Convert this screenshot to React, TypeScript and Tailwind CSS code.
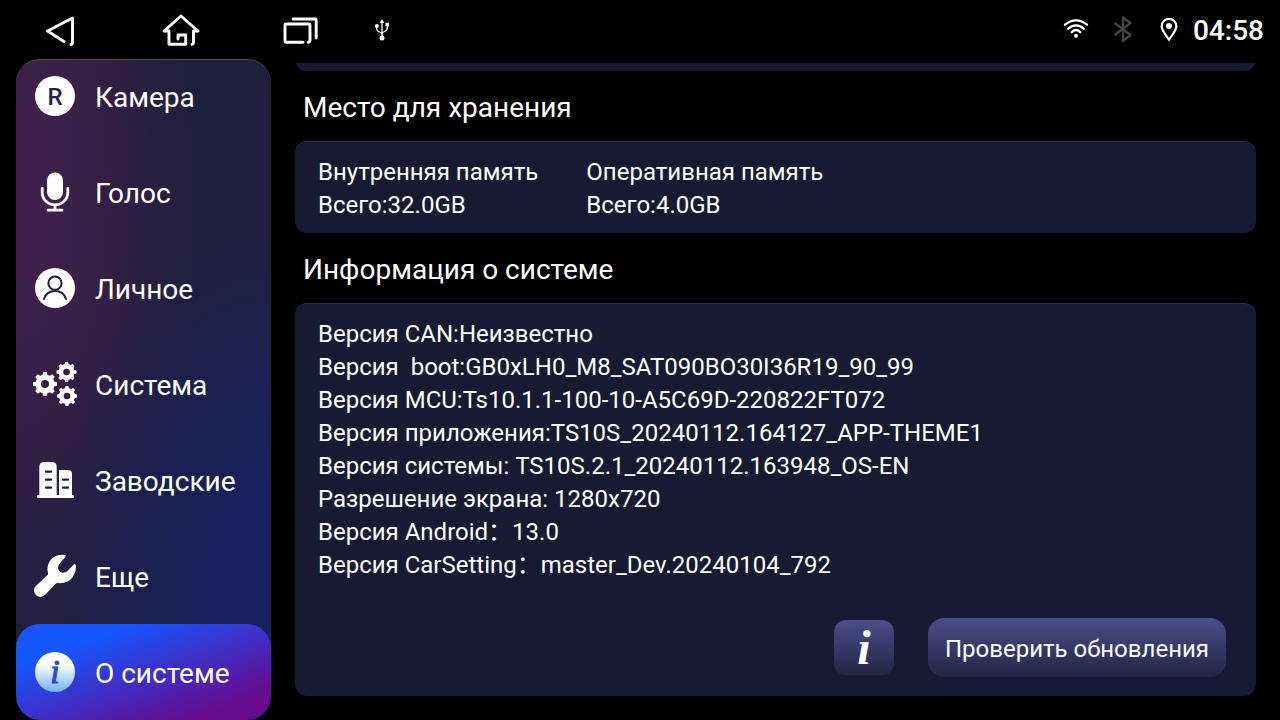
import type { ReactNode } from "react"
import clsx from "clsx"

function BackIcon() {
  return (
    <svg viewBox="0 0 32 32" className="size-8" fill="none" stroke="currentColor" strokeWidth="2.9" strokeLinecap="round" strokeLinejoin="round">
      <path d="M20 27.500 3.500 17 28.500 4v24.500q0 1.800-1.600 2" />
    </svg>
  )
}

function HomeIcon() {
  return (
    <svg viewBox="0 0 40 36" className="h-9 w-10" fill="none" stroke="currentColor" strokeWidth="2.9" strokeLinecap="round" strokeLinejoin="round">
      <path d="M8.500 19H4L21 4 38 19h-4.500v11q0 2-1.500 2.300" />
      <path d="M9 19v13.300h16.700V23H18v4" />
    </svg>
  )
}

function RecentsIcon() {
  return (
    <svg viewBox="0 0 38 32" className="h-8 w-[38px]" fill="none" stroke="currentColor" strokeWidth="2.9" strokeLinecap="round" strokeLinejoin="round">
      <path d="M22 28.300H5q-1 0-1-1V11q0-1 1-1H28q1 0 1 1V26q0 2-1.600 2.300" />
      <path d="M12 5H34q1.200 0 1.200 1.200V24" />
    </svg>
  )
}

function UsbIcon() {
  return (
    <svg viewBox="0 0 16 24" className="h-6 w-4" fill="none" stroke="currentColor" strokeWidth="1.300">
      <path d="M8 20V4M2.700 8v2.500q0 2.500 2.800 3.500Q8 15 8 17M13.300 7v2.500q0 3-2.800 4Q8 14.500 8 16.500" />
      <path d="M8 1 10.300 5H5.700Z" fill="currentColor" stroke="none" />
      <circle cx="8" cy="20" r="2.500" fill="currentColor" stroke="none" />
      <circle cx="2.800" cy="8" r="2" fill="currentColor" stroke="none" />
      <path d="M11.500 4.700h3.600v3.600h-3.600z" fill="currentColor" stroke="none" />
    </svg>
  )
}

function WifiIcon() {
  return (
    <svg viewBox="0 0 26 22" className="h-[22px] w-[26px]" fill="none" stroke="currentColor" strokeWidth="2.300" strokeLinecap="round">
      <path d="M2 5.700Q7 1.300 13 1.300T24 5.700M5.200 9.700Q8.500 6.300 13 6.300T20.800 9.700M8.700 13.200Q10.500 11 13 11T17.300 13.200" />
      <circle cx="13" cy="16.800" r="2" fill="currentColor" stroke="none" />
    </svg>
  )
}

function BluetoothIcon() {
  return (
    <svg viewBox="0 0 20 28" className="h-7 w-5 text-[#444]" fill="none" stroke="currentColor" strokeWidth="2.300" strokeLinejoin="round">
      <path d="M1.500 7 17.500 19 10 25V1.500l7.500 5.500L1.500 19" />
    </svg>
  )
}

function PinIcon() {
  return (
    <svg viewBox="0 0 18 24" className="h-6 w-[18px]" fill="none" stroke="currentColor" strokeWidth="2.200" strokeLinejoin="round">
      <path d="M9 21.800C6.500 17.500 1.700 13 1.700 8.200a7.300 7.300 0 0 1 14.600 0C16.300 13 11.500 17.500 9 21.800Z" />
      <circle cx="9" cy="8" r="3" fill="currentColor" stroke="none" />
    </svg>
  )
}

function CameraIcon() {
  return (
    <span className="flex size-10 items-center justify-center rounded-full bg-white pt-0.5 text-2xl font-medium text-[#2b1f42]">
      R
    </span>
  )
}

function MicIcon() {
  return (
    <svg viewBox="0 0 40 40" className="size-10" fill="none" stroke="currentColor" strokeWidth="2.800" strokeLinecap="round">
      <rect x="12" y="0.500" width="16" height="27.500" rx="8" fill="currentColor" stroke="none" />
      <path d="M7.200 16.500v4a12.800 12.300 0 0 0 25.600 0v-4M20 33v5M13 38.200h14" />
    </svg>
  )
}

function UserIcon() {
  return (
    <svg viewBox="0 0 40 40" className="size-10" fill="none" stroke="#251f40" strokeWidth="2" strokeLinecap="round">
      <circle cx="20" cy="20" r="20" fill="white" stroke="none" />
      <circle cx="20" cy="15.200" r="6.600" />
      <path d="M9 31a11.200 10 0 0 1 22 0" />
    </svg>
  )
}

function Gear({ cx, cy, r }: { cx: number; cy: number; r: number }) {
  return (
    <g transform={`translate(${cx} ${cy}) scale(${r / 12})`} stroke="currentColor">
      <circle r="6.800" strokeWidth="5.600" />
      {[0, 45, 90, 135, 180, 225, 270, 315].map((a) => (
        <path key={a} d="M-2.600-8.800-1.700-12H1.700L2.600-8.800Z" transform={`rotate(${a})`} fill="currentColor" stroke="none" />
      ))}
    </g>
  )
}

function GearsIcon() {
  return (
    <svg viewBox="0 0 44 44" className="size-11" fill="none">
      <Gear cx={12} cy={22} r={12} />
      <Gear cx={33.5} cy={10} r={10} />
      <Gear cx={34} cy={34} r={10} />
    </svg>
  )
}

function BuildingIcon() {
  return (
    <svg viewBox="0 0 40 40" className="size-10" fill="none" stroke="#1e1f3c" strokeWidth="2.200" strokeLinecap="round">
      <g fill="white" stroke="none">
        <path d="M4.300 36V7q0-5 5-5h7.400q5 0 5 5v29Z" />
        <path d="M24 36V10h9q4 0 4 4v22Z" />
        <rect x="2" y="35" width="37" height="3" rx="1" />
      </g>
      <path d="M11 11.700h5M11 19.700h5M11 27.700h5M28 19.700h5M28 27.700h5" />
    </svg>
  )
}

function WrenchIcon() {
  return (
    <svg viewBox="0 0 44 46" className="h-[46px] w-11" fill="currentColor">
      <path d="M33 3 26 11.500Q23.500 16.500 27.500 19 31 20.700 34.500 18L41 11.200Q42.500 10.500 43 13 43.500 19 39.500 24.500 34 31 25 30 24 29.600 23 30.500L12.500 41.500Q7.500 46 3.200 42.300-1.200 37.500 2.800 33L14.500 22Q15.400 21 15 20 13 12 18.500 6 24 1 31.500 2 33.500 2.200 33 3Z" />
    </svg>
  )
}

function InfoIcon() {
  return (
    <span className="flex size-10 items-center justify-center rounded-full bg-linear-to-b from-white from-30% to-[#6fb0fb] font-['Liberation_Serif',serif] text-[34px] leading-none text-[#2b4bc0] italic [-webkit-text-stroke:1px_#2b4bc0]">
      i
    </span>
  )
}

const menu: { label: string; icon: ReactNode; active?: boolean }[] = [
  { label: "Камера", icon: <CameraIcon /> },
  { label: "Голос", icon: <MicIcon /> },
  { label: "Личное", icon: <UserIcon /> },
  { label: "Система", icon: <GearsIcon /> },
  { label: "Заводские", icon: <BuildingIcon /> },
  { label: "Еще", icon: <WrenchIcon /> },
  { label: "О системе", icon: <InfoIcon />, active: true },
]

const memory = [
  { title: "Внутренняя память", total: "Всего:32.0GB" },
  { title: "Оперативная память", total: "Всего:4.0GB" },
]

const versions = [
  "Версия CAN:Неизвестно",
  "Версия  boot:GB0xLH0_M8_SAT090BO30I36R19_90_99",
  "Версия MCU:Ts10.1.1-100-10-A5C69D-220822FT072",
  "Версия приложения:TS10S_20240112.164127_APP-THEME1",
  "Версия системы: TS10S.2.1_20240112.163948_OS-EN",
  "Разрешение экрана: 1280x720",
  "Версия Android：13.0",
  "Версия CarSetting：master_Dev.20240104_792",
]

function StatusBar() {
  return (
    <header className="flex h-[59px] shrink-0 items-center justify-between pr-4">
      <nav className="flex items-center">
        <button type="button" aria-label="Назад" className="flex w-[120px] justify-center">
          <BackIcon />
        </button>
        <button type="button" aria-label="Домой" className="flex w-[120px] justify-center">
          <HomeIcon />
        </button>
        <button type="button" aria-label="Недавние" className="flex w-[120px] justify-center">
          <RecentsIcon />
        </button>
        <span className="flex w-11 justify-center">
          <UsbIcon />
        </span>
      </nav>
      <div className="flex items-center">
        <WifiIcon />
        <span className="ml-6">
          <BluetoothIcon />
        </span>
        <span className="ml-[27px]">
          <PinIcon />
        </span>
        <time className="ml-[15px] pt-0.5 text-[28px] leading-8 font-medium">04:58</time>
      </div>
    </header>
  )
}

function Sidebar() {
  return (
    <nav className="flex w-[255px] shrink-0 flex-col justify-end overflow-hidden rounded-3xl border-t border-[#4a4763] bg-[#1e1f3c] bg-[radial-gradient(ellipse_220px_360px_at_100%_80%,#18205f_25%,transparent),radial-gradient(ellipse_180px_460px_at_0%_20%,#40204a_20%,transparent)]">
      {menu.map(({ label, icon, active }) => (
        <a
          key={label}
          href="#"
          aria-current={active ? "page" : undefined}
          className={clsx(
            "flex h-24 shrink-0 items-center gap-[18px] pl-[17px] text-[28px]",
            active && "rounded-3xl bg-[linear-gradient(160deg,#1557ff_22%,#3d30c8_52%,#650b8c_85%)]",
          )}
        >
          <span className="flex w-11 shrink-0 justify-center">{icon}</span>
          <span className="pt-1">{label}</span>
        </a>
      ))}
    </nav>
  )
}

function Card({ children }: { children: ReactNode }) {
  return (
    <div className="shrink-0 rounded-xl border-t border-[#2c2e48] bg-[#181a33] px-[23px] pt-3.5 pb-[11px] text-2xl leading-[33px]">
      {children}
    </div>
  )
}

function Title({ children }: { children: ReactNode }) {
  return <h2 className="flex h-[70px] shrink-0 items-center px-2 pt-1 text-[28px]">{children}</h2>
}

export default function App() {
  return (
    <div className="flex h-screen flex-col overflow-hidden bg-black font-[Roboto,'Noto_Sans_CJK_SC',sans-serif] text-white">
      <StatusBar />
      <div className="flex min-h-0 flex-1 gap-6 pr-6 pl-4">
        <Sidebar />
        <main className="mt-1 mb-6 flex min-w-0 flex-1 flex-col justify-end overflow-hidden">
          {/* tail of the card scrolled out above */}
          <div className="h-16 shrink-0 rounded-xl bg-[#181a33]" />

          <Title>Место для хранения</Title>
          <Card>
            <div className="flex gap-12">
              {memory.map(({ title, total }) => (
                <div key={title}>
                  <p>{title}</p>
                  <p>{total}</p>
                </div>
              ))}
            </div>
          </Card>

          <Title>Информация о системе</Title>
          <Card>
            {versions.map((line) => (
              <p key={line} className="whitespace-pre">
                {line}
              </p>
            ))}
            <div className="mt-9 mr-[7px] mb-2 flex items-center justify-end gap-[34px]">
              <button
                type="button"
                aria-label="Информация"
                className="flex h-[55px] w-[60px] items-center justify-center rounded-xl bg-linear-to-b from-[#4b4e8c] to-[#232643] font-['Liberation_Serif',serif] text-5xl leading-none font-bold italic"
              >
                i
              </button>
              <button
                type="button"
                className="h-[59px] rounded-2xl bg-linear-to-b from-[#4b4e8c] to-[#232643] px-[17px] pt-1"
              >
                Проверить обновления
              </button>
            </div>
          </Card>
        </main>
      </div>
    </div>
  )
}
